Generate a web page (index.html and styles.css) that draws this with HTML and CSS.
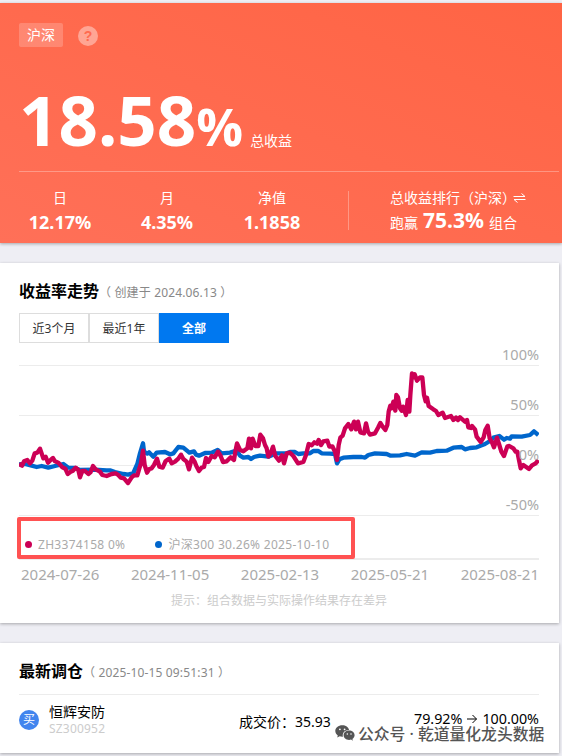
FILE: index.html
```html
<!DOCTYPE html>
<html lang="zh-CN">
<head>
    <meta charset="UTF-8">
    <meta name="viewport" content="width=device-width, initial-scale=1.0">
    <title>组合收益</title>
    <link rel="stylesheet" href="styles.css">
</head>
<body>
    <!-- 总收益 -->
    <header class="summary">
        <div class="tags">
            <span class="market">沪深</span>
            <span class="help">?</span>
        </div>
        <div class="total">
            <span class="total-num">18.58</span>
            <span class="total-unit">%</span>
            <span class="total-label">总收益</span>
        </div>
        <div class="stats">
            <div class="stat"><span>日</span><b>12.17%</b></div>
            <div class="stat"><span>月</span><b>4.35%</b></div>
            <div class="stat"><span>净值</span><b>1.1858</b></div>
            <div class="rank">
                <div class="rank-title">
                    <span>总收益排行（沪深）</span>
                    <svg class="swap" width="13" height="12" viewBox="0 0 13 12"><path d="M0.5 4.5H12L8.5 1.5M12.5 7.5H1L4.5 10.5"/></svg>
                </div>
                <div class="rank-value"><span>跑赢</span><b>75.3%</b><span>组合</span></div>
            </div>
        </div>
    </header>

    <!-- 收益率走势 -->
    <section class="card trend">
        <div class="card-title">
            <h2>收益率走势</h2>
            <small>（ 创建于 2024.06.13 ）</small>
        </div>
        <div class="tabs">
            <button>近3个月</button>
            <button>最近1年</button>
            <button class="active">全部</button>
        </div>
        <svg class="chart" width="520" height="215" viewBox="57 15 1560 645">
            <path class="grid" d="M57 76.5H1617M57 226.5H1617M57 376.5H1617M57 526.5H1617"/>
            <path class="axis" d="M57 657H1617"/>
            <polyline class="line index" points="57,373 75,372 95,377 110,381 125,378 145,383 165,378 190,372 205,383 225,384 240,390 285,389 320,391 330,391 345,396 370,402 385,404 400,399 412,372 420,340 429,310 432,335 442,341 447,337 460,350 470,338 495,336 510,343 520,340 535,321 550,323 568,338 582,334 588,344 597,347 615,339 635,338 653,330 665,340 690,338 710,332 720,347 730,353 745,351 753,357 762,351 780,347 805,350 830,340 860,340 870,336 885,336 895,342 910,340 930,340 940,333 955,333 965,340 990,341 1005,342 1011,370 1018,358 1030,353 1060,351 1085,351 1095,353 1105,345 1125,340 1160,342 1172,347 1200,346 1220,342 1245,347 1265,337 1290,338 1310,333 1340,332 1360,323 1385,321 1395,328 1410,324 1430,322 1445,316 1455,312 1470,303 1480,293 1498,288 1512,299 1520,294 1530,296 1535,289 1565,290 1590,285 1602,274 1615,285"/>
            <polyline class="line fund" points="57,372 66,377 72,364 82,360 90,370 97,362 104,340 112,338 120,326 130,355 137,350 144,368 152,360 159,354 165,364 175,368 187,382 196,386 203,402 212,395 218,393 227,383 235,390 240,412 247,393 255,393 265,402 272,396 279,378 287,388 300,395 307,405 320,408 335,402 347,400 355,405 362,413 372,415 384,429 395,412 402,406 412,406 418,385 423,370 429,332 434,375 441,398 448,387 455,385 462,375 471,356 478,380 488,383 497,363 508,356 515,370 525,365 535,356 543,344 550,357 560,365 567,388 576,353 584,365 589,378 597,393 605,383 612,381 618,354 625,366 635,348 644,352 654,335 662,348 669,366 680,364 692,352 702,360 706,335 711,310 720,330 730,334 742,325 747,296 753,325 758,296 766,318 775,318 781,284 789,295 795,315 800,325 805,350 812,340 819,320 826,348 837,362 846,346 852,370 860,340 870,338 880,348 894,370 910,366 918,345 926,312 935,316 943,307 951,311 956,300 963,315 970,304 982,302 988,320 997,319 1005,335 1011,360 1016,315 1021,293 1028,287 1035,265 1045,252 1054,268 1062,245 1068,268 1074,245 1081,277 1092,280 1098,250 1104,275 1110,284 1125,280 1134,263 1141,249 1148,260 1156,270 1162,255 1166,215 1171,197 1175,205 1180,185 1186,212 1189,165 1194,172 1200,205 1205,212 1209,200 1218,225 1223,180 1228,215 1231,165 1236,100 1240,112 1244,103 1251,122 1260,112 1267,112 1272,165 1277,184 1281,173 1286,198 1300,208 1308,213 1315,225 1328,218 1335,234 1353,228 1360,240 1368,233 1374,240 1380,232 1395,245 1401,240 1405,262 1413,264 1416,258 1425,268 1430,290 1442,306 1451,292 1456,270 1463,257 1469,295 1475,305 1482,322 1491,293 1498,315 1504,335 1512,348 1522,319 1528,318 1540,325 1547,335 1552,335 1557,360 1562,385 1570,375 1587,387 1596,376 1607,370 1615,360"/>
            <g class="scale">
                <text x="1617" y="60">100%</text>
                <text x="1617" y="210">50%</text>
                <text x="1617" y="360">0%</text>
                <text x="1617" y="510">-50%</text>
            </g>
        </svg>
        <div class="legend">
            <span class="legend-fund">ZH3374158 0%</span>
            <span class="legend-index">沪深300 30.26% 2025-10-10</span>
        </div>
        <div class="dates">
            <span>2024-07-26</span>
            <span>2024-11-05</span>
            <span>2025-02-13</span>
            <span>2025-05-21</span>
            <span>2025-08-21</span>
        </div>
        <p class="hint">提示：组合数据与实际操作结果存在差异</p>
    </section>

    <!-- 最新调仓 -->
    <section class="card trades">
        <div class="card-title">
            <h2>最新调仓</h2>
            <small>（ 2025-10-15 09:51:31 ）</small>
        </div>
        <div class="trade">
            <span class="buy">买</span>
            <div class="stock">
                <span>恒辉安防</span>
                <small>SZ300952</small>
            </div>
            <div class="price">成交价：35.93</div>
            <div class="change">
                <span>79.92%</span>
                <svg class="arrow" width="12" height="10" viewBox="0 0 12 10"><path d="M1 5H10.5M6.5 1L10.5 5L6.5 9"/></svg>
                <span>100.00%</span>
            </div>
        </div>
    </section>

    <!-- 公众号 -->
    <div class="account">
        <svg width="20" height="16" viewBox="0 0 20 16">
            <path d="M7.3 0.3C3.3 0.3 0.3 2.8 0.3 6c0 1.8 1 3.4 2.5 4.4L2.2 12.6l2.5-1.3c0.8 0.3 1.7 0.4 2.6 0.4h0.6C7 7.6 10.2 4.9 14.1 4.9C13.5 2.2 10.7 0.3 7.3 0.3Z"/>
            <path d="M19.6 10.2c0-2.6-2.5-4.6-5.5-4.6s-5.5 2-5.5 4.6s2.5 4.7 5.5 4.7c0.7 0 1.3-0.1 1.9-0.3l1.9 1.1l-0.5-1.8c1.3-0.9 2.2-2.2 2.2-3.7Z"/>
            <g fill="#fff"><circle cx="4.9" cy="4.3" r="0.9"/><circle cx="9.6" cy="4.3" r="0.9"/><circle cx="12.3" cy="8.9" r="0.75"/><circle cx="16" cy="8.9" r="0.75"/></g>
        </svg>
        <span>公众号 · 乾道量化龙头数据</span>
    </div>
</body>
</html>
```
FILE: styles.css
```css
/* 通用 */
* {
    box-sizing: border-box;
}
body {
    position: relative;
    margin: 0;
    padding-top: 3px;
    height: 756px;
    overflow: hidden;
    font-family: "Noto Sans", "Noto Sans CJK SC", sans-serif;
    font-size: 14px;
    background-color: #eeeef4;
    color: #000;
    white-space: nowrap;
}

/* 总收益 */
.summary {
    height: 240px;
    padding: 20px 3px 0 19px;
    background: linear-gradient(to top right, #ff7058, #ff6444);
    color: #fff;
    box-shadow: 0 1px 3px rgba(0, 0, 0, 0.3);
}
.tags {
    display: flex;
    align-items: center;
    gap: 15px;
    height: 24px;
}
.market {
    width: 44px;
    line-height: 24px;
    text-align: center;
    border-radius: 2px;
    background-color: rgba(255, 255, 255, 0.2);
}
.help {
    width: 20px;
    height: 20px;
    margin-top: 2px;
    line-height: 20px;
    text-align: center;
    font-family: "Liberation Sans", sans-serif;
    font-weight: bold;
    border-radius: 50%;
    background-color: rgba(255, 255, 255, 0.4);
    color: #ff6b50;
}
.total {
    display: flex;
    align-items: baseline;
    height: 125px;
    line-height: 144px;
    border-bottom: 1px solid rgba(255, 255, 255, 0.3);
}
.total-num {
    font-size: 69px;
    font-weight: bold;
}
.total-unit {
    font-family: "Open Sans", "Noto Sans", sans-serif;
    font-size: 52px;
    font-weight: bold;
    letter-spacing: -1px;
}
.total-label {
    margin-left: 8px;
}
.stats {
    display: grid;
    grid-template-columns: 82px 132px 78px 37px 1fr;
    padding-top: 14px;
}
.stat {
    display: flex;
    flex-direction: column;
    align-items: center;
    line-height: 24px;
}
.stat b {
    font-size: 18px;
}
.rank {
    grid-column: 5;
    height: 39px;
    margin-top: 5px;
    padding-left: 41px;
    border-left: 1px solid rgba(255, 255, 255, 0.3);
}
.rank-title {
    display: flex;
    align-items: center;
    height: 18px;
    margin-top: -2px;
    line-height: 18px;
}
.rank-title svg {
    margin-left: -3px;
}
.rank-value {
    display: flex;
    align-items: baseline;
    gap: 5px;
    line-height: 27px;
}
.rank-value b {
    font-size: 21px;
}
.swap, .arrow {
    fill: none;
    stroke: currentColor;
}

/* 卡片 */
.card {
    position: relative;
    width: 559px;
    margin-top: 20px;
    padding: 0 20px 0 19px;
    background-color: #fff;
    box-shadow: 0 1px 3px rgba(0, 0, 0, 0.3);
}
.card-title {
    display: flex;
    align-items: baseline;
    line-height: 56px;
    height: 50px;
}
.card-title h2 {
    margin: 0;
    font-size: 16px;
}
.card-title small {
    font-size: 12px;
    letter-spacing: 0.15px;
    color: #888;
}

/* 走势图 */
.trend {
    height: 360px;
}
.tabs {
    display: flex;
    height: 30px;
}
.tabs button {
    width: 70px;
    padding: 0;
    font-family: inherit;
    font-size: 12px;
    color: #333;
    border: 1px solid #ddd;
    background-color: #fff;
}
.tabs .active {
    font-weight: bold;
    color: #fff;
    border-color: #0078f0;
    background-color: #0078f0;
}
.chart {
    display: block;
    margin-top: 2px;
}
.grid {
    stroke: #ececec;
    stroke-width: 3;
}
.axis {
    stroke: #ececec;
    stroke-width: 6;
}
.line {
    fill: none;
    stroke-width: 13;
    stroke-linejoin: round;
}
.index {
    stroke: #0066cc;
}
.fund {
    stroke: #cc0055;
}
.scale {
    font-size: 43.5px;
    text-anchor: end;
    fill: #aaa;
}
.legend {
    position: absolute;
    left: 17px;
    top: 254px;
    display: flex;
    align-items: center;
    gap: 30px;
    width: 338px;
    height: 42px;
    padding: 14px 0 2px 4px;
    border: 4px solid #ff5252;
    border-radius: 2px;
    font-size: 12px;
    letter-spacing: 0.3px;
    color: #aaa;
}
.legend span::before {
    content: "";
    display: inline-block;
    width: 7px;
    height: 7px;
    margin-right: 6px;
    border-radius: 50%;
    vertical-align: 1px;
}
.legend .legend-fund::before {
    background-color: #cc0055;
}
.legend .legend-index::before {
    background-color: #0066cc;
}
.dates {
    display: flex;
    justify-content: space-between;
    padding-left: 2px;
    font-size: 15px;
    line-height: 28px;
    color: #aaa;
}
.hint {
    margin: 0;
    text-align: center;
    font-size: 12px;
    line-height: 26px;
    color: #ccc;
}

/* 调仓 */
.trades {
    height: 110px;
}
.trades .card-title {
    height: 52px;
    line-height: 56px;
    border-bottom: 1px solid #ececec;
}
.trade {
    display: flex;
    align-items: center;
    height: 50px;
}
.buy {
    width: 20px;
    height: 20px;
    margin: -1px 10px 0 0;
    border-radius: 50%;
    text-align: center;
    font-size: 12px;
    line-height: 20px;
    background-color: #4285ee;
    color: #fff;
}
.stock {
    display: flex;
    flex-direction: column;
    width: 190px;
    line-height: 18px;
}
.stock small {
    font-size: 12px;
    line-height: 16px;
    letter-spacing: 0.2px;
    color: #ccc;
}
.price {
    padding-top: 1px;
}
.change {
    display: flex;
    align-items: center;
    gap: 4px;
    margin: -3px 0 0 auto;
    font-size: 14.3px;
}
.account {
    position: absolute;
    left: 335px;
    top: 721px;
    display: flex;
    align-items: center;
    gap: 3px;
    height: 24px;
    font-size: 15.8px;
    font-weight: 500;
    color: #555;
    fill: #555;
}
```
